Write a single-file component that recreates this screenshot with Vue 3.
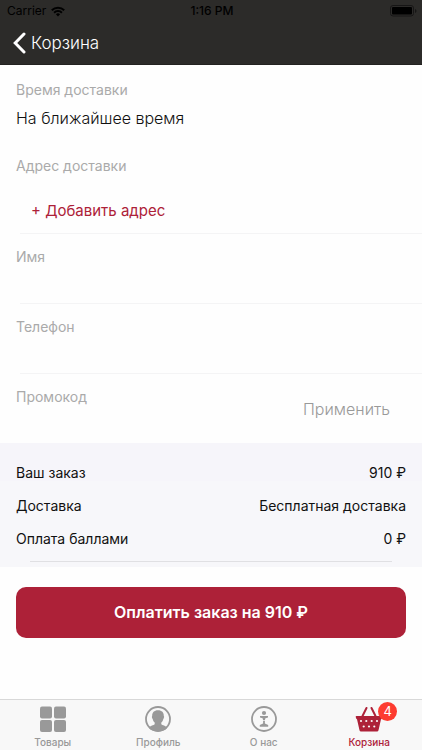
<script setup>
import { ref } from 'vue'

const name = ref('')
const phone = ref('')
const promo = ref('')

const totals = [
  { label: 'Ваш заказ', value: '910 ₽' },
  { label: 'Доставка', value: 'Бесплатная доставка' },
  { label: 'Оплата баллами', value: '0 ₽' },
]

const tabs = [
  { id: 'goods', label: 'Товары' },
  { id: 'profile', label: 'Профиль' },
  { id: 'about', label: 'О нас' },
  { id: 'cart', label: 'Корзина', badge: 4, active: true },
]
</script>

<template>
  <div class="screen">
    <header class="top">
      <div class="status">
        <div class="carrier">
          <span>Carrier</span>
          <svg width="14" height="11" viewBox="0 0 14 11" aria-hidden="true">
            <g fill="none" stroke="#000" stroke-width="2">
              <path d="M0.8 4.2a8.8 8.8 0 0 1 12.4 0" />
              <path d="M3.1 6.7a5.5 5.5 0 0 1 7.8 0" />
            </g>
            <path d="M4.9 8.3a3 3 0 0 1 4.2 0L7 10.6z" />
          </svg>
        </div>
        <span class="clock">1:16 PM</span>
        <svg class="battery" width="27" height="12" viewBox="0 0 27 12" aria-hidden="true">
          <rect x="0.5" y="0.5" width="23" height="10.5" rx="2.5" fill="none" stroke="#171616" />
          <rect x="2" y="2" width="20" height="7.5" rx="1" />
          <path d="M25 4v4q1.5-.6 1.5-2T25 4z" fill="#171616" />
        </svg>
      </div>
      <nav class="nav">
        <a class="back" href="#">
          <svg width="13" height="22" viewBox="0 0 13 22" aria-hidden="true">
            <path d="M11 2L2.2 11L11 20" fill="none" stroke="#fff" stroke-width="3" stroke-linecap="round" />
          </svg>
          <span>Корзина</span>
        </a>
      </nav>
    </header>

    <main class="content">
      <section class="time">
        <h2 class="label">Время доставки</h2>
        <p class="value">На ближайшее время</p>
      </section>

      <section class="address">
        <h2 class="label">Адрес доставки</h2>
        <button type="button" class="add">+ Добавить адрес</button>
      </section>

      <form @submit.prevent>
        <div class="field">
          <label class="label" for="name">Имя</label>
          <input id="name" v-model="name" type="text" />
        </div>
        <div class="field">
          <label class="label" for="phone">Телефон</label>
          <input id="phone" v-model="phone" type="tel" />
        </div>
        <div class="field promo">
          <div class="promo-entry">
            <label class="label" for="promo">Промокод</label>
            <input id="promo" v-model="promo" type="text" />
          </div>
          <button type="submit" class="apply">Применить</button>
        </div>
      </form>

      <section class="summary">
        <dl>
          <div v-for="row in totals" :key="row.label" class="row">
            <dt>{{ row.label }}</dt>
            <dd>{{ row.value }}</dd>
          </div>
        </dl>
        <hr />
      </section>

      <button type="button" class="pay">Оплатить заказ на 910 ₽</button>
    </main>

    <nav class="tabs">
      <a v-for="tab in tabs" :key="tab.id" href="#" class="tab" :class="{ active: tab.active }">
        <span class="icon">
          <svg v-if="tab.id === 'goods'" width="28" height="28" viewBox="0 0 28 28" fill="currentColor" aria-hidden="true">
            <rect x="1" y="1.5" width="12" height="12" rx="2" />
            <rect x="15" y="1.5" width="12" height="12" rx="2" />
            <rect x="1" y="15" width="12" height="12" rx="2" />
            <rect x="15" y="15" width="12" height="12" rx="2" />
          </svg>
          <svg v-else-if="tab.id === 'profile'" width="28" height="28" viewBox="0 0 28 28" aria-hidden="true">
            <circle cx="14" cy="14" r="12" fill="none" stroke="currentColor" stroke-width="1.8" />
            <path
              fill="currentColor"
              d="M14 5.200c-3.900 0-6 2.400-5.800 5.800-.6.400-.3 2.300.5 2.900.4 1.800 1.100 2.900 2 3.700v1.700c-1.100 1.100-4.200 1.400-6.100 3.400A12.400 12.400 0 0 0 14 26.400a12.400 12.400 0 0 0 9.400-3.700c-1.900-2-5-2.300-6.100-3.400v-1.700c.9-.8 1.600-1.900 2-3.700.8-.6 1.100-2.500.5-2.900.2-3.400-1.900-5.800-5.800-5.800z"
            />
          </svg>
          <svg v-else-if="tab.id === 'about'" width="28" height="28" viewBox="0 0 28 28" aria-hidden="true">
            <circle cx="14" cy="14" r="12" fill="none" stroke="currentColor" stroke-width="1.8" />
            <g fill="currentColor">
              <circle cx="14" cy="8" r="2.100" />
              <path d="M10 11h8v1.600l-2.600.6-.5 2h-1.800l-.5-2-2.600-.6z" />
              <path d="M13.100 16h1.800v2.600l3.300 1.400v1.700H9.800V20l3.300-1.400z" />
            </g>
          </svg>
          <svg v-else width="28" height="28" viewBox="0 0 28 28" aria-hidden="true">
            <path d="M7.500 11L11.500 3M20.500 11L16.500 3" fill="none" stroke="currentColor" stroke-width="2" stroke-linecap="round" />
            <path d="M1.500 11h25q1 0 .8 1l-.5 1.500q-.2.500-.8.700l-2.500 11q-.3 1.300-1.500 1.300H6q-1.200 0-1.500-1.300L2 14.200q-.6-.2-.8-.7L.7 12q-.2-1 .8-1z" fill="currentColor" />
            <g fill="#f8f8f8">
              <circle cx="6" cy="16" r="1.100" />
              <circle cx="11.300" cy="16" r="1.100" />
              <circle cx="16.700" cy="16" r="1.100" />
              <circle cx="22" cy="16" r="1.100" />
              <circle cx="8.700" cy="21.500" r="1.100" />
              <circle cx="14" cy="21.500" r="1.100" />
              <circle cx="19.300" cy="21.500" r="1.100" />
            </g>
          </svg>
          <span v-if="tab.badge" class="badge">{{ tab.badge }}</span>
        </span>
        <span>{{ tab.label }}</span>
      </a>
    </nav>
  </div>
</template>

<style>
body {
  background: #fefefe;
}
</style>

<style scoped>
.screen {
  display: flex;
  flex-direction: column;
  min-height: 100vh;
  font-family: Inter, "Liberation Sans", sans-serif;
  color: #111;
}

.screen * {
  box-sizing: border-box;
}

.top {
  background: #2c2b29;
  border-bottom: 1px solid #232220;
}

.status {
  display: grid;
  grid-template-columns: 1fr auto 1fr;
  align-items: center;
  height: 22px;
  padding: 0 5px 0 7px;
  font-size: 12px;
  line-height: 22px;
  color: #000;
}

.carrier {
  display: flex;
  align-items: center;
  gap: 5px;
}

.clock {
  font-weight: 500;
}

.battery {
  justify-self: end;
}

.nav {
  display: flex;
  align-items: center;
  height: 42px;
  padding: 0 13px;
}

.back {
  display: flex;
  align-items: center;
  gap: 5px;
  color: #fff;
  font-size: 17px;
  font-weight: 300;
  text-decoration: none;
}

.content {
  flex: 1;
}

.label {
  display: block;
  margin: 0;
  font-size: 14px;
  font-weight: 400;
  line-height: 20px;
  color: #aaa;
}

.time {
  padding: 15px 16px 0;
}

.value {
  margin: 6px 0 0;
  font-size: 16px;
  font-weight: 300;
  line-height: 24px;
}

.address {
  padding: 26px 16px 10px;
}

button {
  border: 0;
  background: none;
  font-family: inherit;
  cursor: pointer;
}

.add {
  display: block;
  margin: 23px 0 0 15px;
  padding: 0;
  font-size: 15px;
  line-height: 24px;
  color: #ad2138;
}

.field {
  padding: 14px 16px 0;
  background: linear-gradient(#f4f4f5, #f4f4f5) 20px 0 / 100% 1px no-repeat;
}

.field input {
  display: block;
  width: 100%;
  height: 36px;
  padding: 0;
  border: 0;
  outline: 0;
  background: none;
  font-family: inherit;
  font-size: 16px;
}

.promo {
  display: flex;
  align-items: flex-start;
}

.promo-entry {
  flex: 1;
}

.apply {
  margin: 10px 16px 0 0;
  padding: 0;
  font-size: 16px;
  font-weight: 300;
  line-height: 24px;
  color: #999;
}

.summary {
  padding: 13px 16px 5px;
  background: linear-gradient(#f6f5fa 38px, #f7f7fa 38px);
}

.summary dl {
  margin: 0;
}

.row {
  display: flex;
  justify-content: space-between;
  font-size: 14px;
  line-height: 33px;
}

.row dd {
  margin: 0;
}

hr {
  height: 1px;
  margin: 6px 14px 0;
  border: 0;
  background: #e0e0e3;
}

.pay {
  display: block;
  width: calc(100% - 32px);
  margin: 20px 16px;
  padding: 0;
  border-radius: 10px;
  background: #ad2138;
  color: #fff;
  font-size: 16px;
  font-weight: 600;
  line-height: 51px;
}

.tabs {
  display: grid;
  grid-template-columns: repeat(4, 1fr);
  height: 51px;
  border-top: 1px solid #d8d8d8;
  background: #f8f8f8;
}

.tab {
  display: flex;
  flex-direction: column;
  align-items: center;
  gap: 2px;
  padding-top: 5px;
  font-size: 10px;
  font-weight: 500;
  line-height: 14px;
  color: #999;
  text-decoration: none;
}

.tab.active {
  color: #ad2138;
}

.icon {
  position: relative;
  height: 28px;
}

.icon svg {
  display: block;
}

.badge {
  position: absolute;
  top: -3px;
  left: 23px;
  width: 19px;
  border-radius: 10px;
  background: #fd3b30;
  color: #fff;
  font-size: 13px;
  font-weight: 400;
  line-height: 19px;
  text-align: center;
}
</style>
